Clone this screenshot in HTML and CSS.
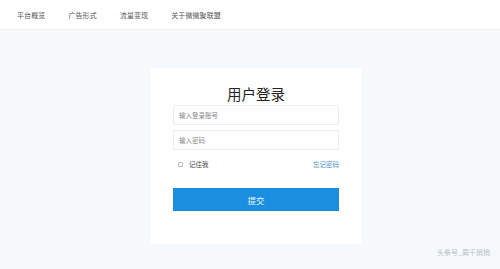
FILE: index.html
```html
<!DOCTYPE html>
<html lang="zh">
<head>
<meta charset="utf-8">
<link rel="stylesheet" href="styles.css">
</head>
<body>
<header class="topbar">
  <nav class="nav">
    <a class="nav-item">平台概览</a>
    <a class="nav-item">广告形式</a>
    <a class="nav-item">流量变现</a>
    <a class="nav-item">关于微微聚联盟</a>
  </nav>
</header>
<main class="main">
  <section class="card">
    <h1 class="title">用户登录</h1>
    <div class="field">输入登录账号</div>
    <div class="field">输入密码</div>
    <div class="row">
      <label class="remember"><span class="check"></span>记住我</label>
      <a class="forgot">忘记密码</a>
    </div>
    <button class="submit">提交</button>
  </section>
  <div class="watermark">头条号_周千捎捎</div>
</main>
</body>
</html>
```
FILE: styles.css
```css
* { box-sizing: border-box; }
html, body { margin: 0; padding: 0; }
body {
  width: 500px;
  height: 269px;
  overflow: hidden;
  font-family: "Noto Sans CJK SC", "Noto Sans", sans-serif;
  background: #f5f9fc;
  color: #333;
}
.topbar {
  height: 30px;
  background: #fff;
  border-bottom: 1px solid #eeeeee;
}
.nav {
  display: flex;
  padding-left: 17px;
  height: 29px;
  align-items: center;
  gap: 23px;
}
.nav-item {
  font-size: 7px;
  color: #555;
  letter-spacing: 0.1px;
}
.main {
  position: relative;
  height: 239px;
  padding-top: 38px;
}
.card {
  width: 212px;
  height: 176px;
  margin-left: 150px;
  background: #fff;
  padding: 15px 23px 0 23px;
  display: flex;
  flex-direction: column;
}
.title {
  margin: 0;
  font-size: 14.5px;
  font-weight: 400;
  text-align: center;
  line-height: 22px;
  color: #222;
}
.field {
  height: 20px;
  border: 1px solid #ececec;
  border-radius: 2px;
  font-size: 6.5px;
  color: #888;
  line-height: 18px;
  padding-left: 5px;
  margin-bottom: 5px;
}
.row {
  display: flex;
  justify-content: space-between;
  align-items: center;
  height: 16px;
  margin-top: 1px;
  padding-left: 5px;
  font-size: 6.5px;
}
.remember {
  display: flex;
  align-items: center;
  gap: 6px;
  color: #444;
}
.check {
  width: 5px;
  height: 5px;
  border: 1px solid #bbb;
  border-radius: 1px;
}
.forgot { color: #4a90c0; }
.submit {
  margin-top: 16px;
  height: 23px;
  border: none;
  background: #1a8fe0;
  color: #e8f3fd;
  font-family: "Noto Sans CJK SC", sans-serif;
  font-size: 8.5px;
  padding: 0;
}
.watermark {
  position: absolute;
  right: 10px;
  bottom: 12px;
  font-size: 7px;
  color: #b8bec6;
}
```
